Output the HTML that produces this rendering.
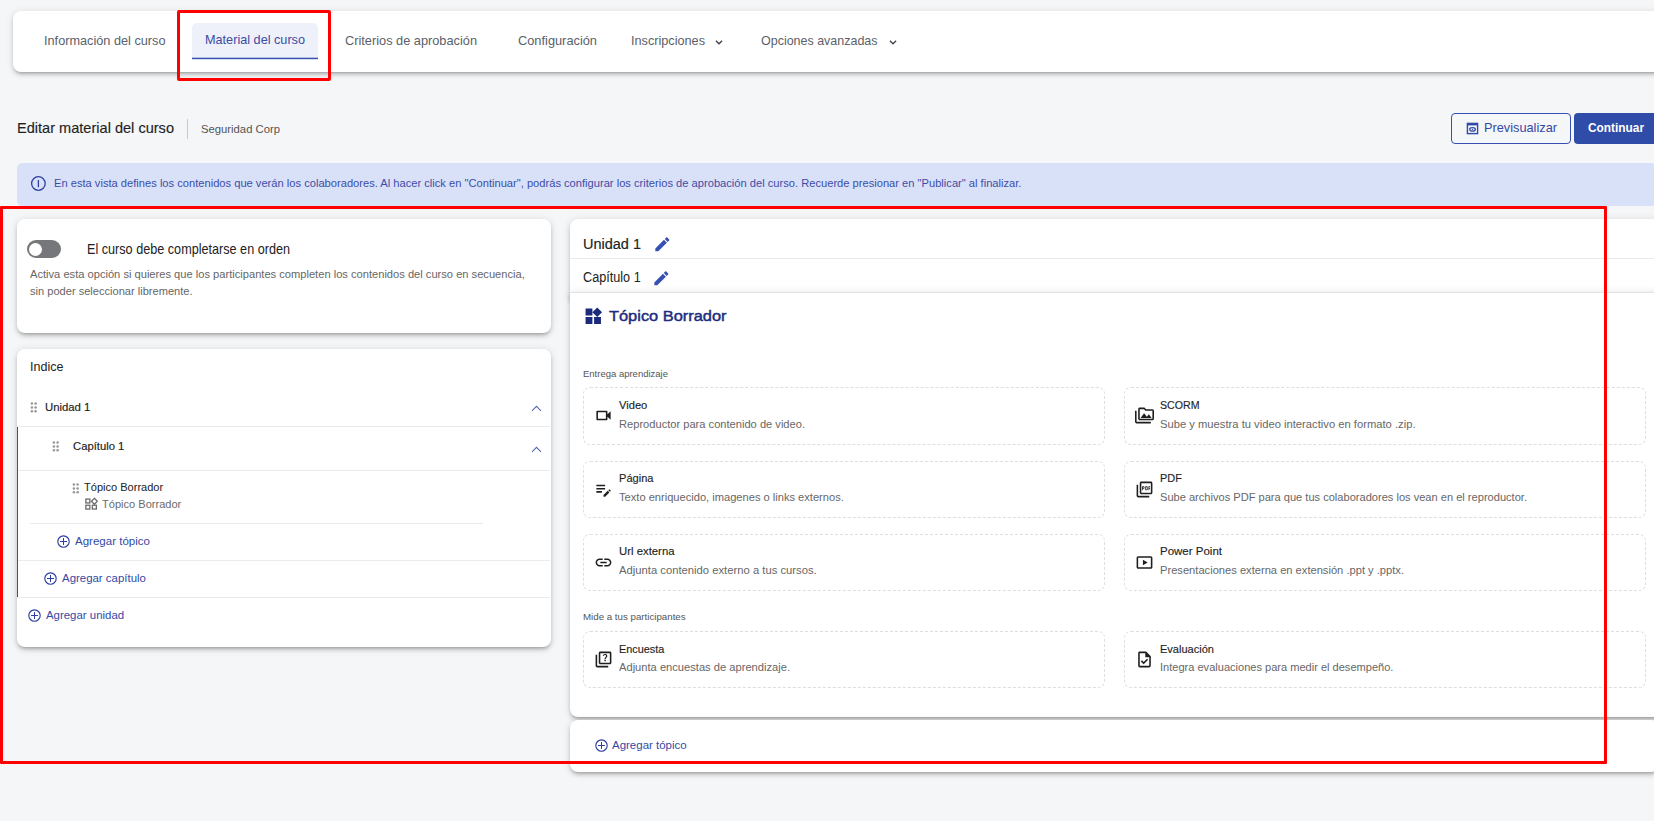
<!DOCTYPE html>
<html><head><meta charset="utf-8">
<style>
*{box-sizing:border-box;margin:0;padding:0}
html,body{width:1654px;height:821px;overflow:hidden;background:#f5f6f8;font-family:"Liberation Sans",sans-serif;color:#222}
.a{position:absolute}
.t{position:absolute;white-space:nowrap;line-height:1}
.card{position:absolute;background:#fff;border-radius:8px;box-shadow:0 3px 3px -2px rgba(0,0,0,.2),0 3px 4px 0 rgba(0,0,0,.14),0 1px 8px 0 rgba(0,0,0,.12)}
.red{position:absolute;border:3px solid #ff0000;border-radius:2px}
.hr{position:absolute;height:1px;background:#ebebeb}
.item{position:absolute;border:1px dashed #dedede;border-radius:7px;width:522px;background:#fff}
.item svg{position:absolute}
</style></head><body>
<div class="card" style="left:13px;top:11px;width:1660px;height:61px;border-radius:8px;box-shadow:0 3px 3px -2px rgba(0,0,0,.22),0 3px 4px 0 rgba(0,0,0,.12),0 1px 8px 0 rgba(0,0,0,.1)"></div>
<div class="a" style="left:192px;top:23px;width:126px;height:35px;background:#eef1f9;border-radius:5px 5px 0 0"></div>
<svg class="a" style="left:192px;top:56px" width="126" height="4"><rect x="0" y="1.7" width="126" height="1.5" fill="#3550b0"/></svg>
<div class="t" style="left:43.5px;top:33.66px;font-size:13.4px;color:#5b5f6a;transform:scaleX(0.9491);transform-origin:0 0;">Información del curso</div>
<div class="t" style="left:205px;top:33.16px;font-size:13.4px;color:#3b4ca3;transform:scaleX(0.9462);transform-origin:0 0;">Material del curso</div>
<div class="t" style="left:345px;top:33.66px;font-size:13.4px;color:#5b5f6a;transform:scaleX(0.9534);transform-origin:0 0;">Criterios de aprobación</div>
<div class="t" style="left:518px;top:33.66px;font-size:13.4px;color:#5b5f6a;transform:scaleX(0.9559);transform-origin:0 0;">Configuración</div>
<div class="t" style="left:631px;top:33.66px;font-size:13.4px;color:#5b5f6a;transform:scaleX(0.9468);transform-origin:0 0;">Inscripciones</div>
<div class="t" style="left:760.5px;top:33.66px;font-size:13.4px;color:#5b5f6a;transform:scaleX(0.9315);transform-origin:0 0;">Opciones avanzadas</div>
<svg class="a" style="left:713.5px;top:38.8px" width="10" height="7" viewBox="0 0 10 7"><path d="M1.9 1.7 L5 4.8 L8.1 1.7" fill="none" stroke="#3f434c" stroke-width="1.3"/></svg>
<svg class="a" style="left:887.5px;top:38.8px" width="10" height="7" viewBox="0 0 10 7"><path d="M1.9 1.7 L5 4.8 L8.1 1.7" fill="none" stroke="#3f434c" stroke-width="1.3"/></svg>
<div class="red" style="left:177px;top:10px;width:154px;height:71px"></div>
<div class="t" style="left:17px;top:120.81px;font-size:14.4px;color:#1f1f1f;-webkit-text-stroke:0.15px #1f1f1f;transform:scaleX(1.0118);transform-origin:0 0;">Editar material del curso</div>
<div class="a" style="left:187px;top:119px;width:1px;height:20px;background:#c9c9c9"></div>
<div class="t" style="left:201px;top:123.38px;font-size:11.6px;color:#555;transform:scaleX(0.9727);transform-origin:0 0;">Seguridad Corp</div>
<div class="a" style="left:1451px;top:113px;width:120px;height:31px;border:1px solid #3550b0;border-radius:4px"></div>
<svg class="a" style="left:1466px;top:122px" width="13" height="13" viewBox="0 0 13 13"><rect x="1.4" y="1.4" width="10.2" height="10.2" fill="none" stroke="#2f4aa8" stroke-width="1.4"/><rect x="1" y="1" width="11" height="2.4" fill="#2f4aa8"/><ellipse cx="6.5" cy="7.4" rx="2.8" ry="1.7" fill="none" stroke="#2f4aa8" stroke-width="1.3"/><circle cx="6.5" cy="7.4" r="0.7" fill="#2f4aa8"/></svg>
<div class="t" style="left:1484px;top:120.61px;font-size:13.1px;color:#3449a4;transform:scaleX(0.9739);transform-origin:0 0;">Previsualizar</div>
<div class="a" style="left:1574px;top:113px;width:90px;height:31px;background:#2f4ca8;border-radius:4px"></div>
<div class="t" style="left:1588px;top:120.61px;font-size:13.1px;color:#fff;font-weight:700;transform:scaleX(0.9057);transform-origin:0 0;">Continuar</div>
<div class="a" style="left:17px;top:163px;width:1639px;height:43px;background:#d9e1f9;border-radius:5px"></div>
<svg class="a" style="left:30px;top:175.3px" width="17" height="17" viewBox="0 0 17 17"><circle cx="8.4" cy="8.5" r="6.8" fill="none" stroke="#2f40a0" stroke-width="1.3"/><rect x="7.75" y="5" width="1.3" height="7.2" fill="#2f40a0"/></svg>
<div class="t" style="left:54px;top:177.69px;font-size:11px;color:#3d4da5;transform:scaleX(1.0126);transform-origin:0 0;">En esta vista defines los contenidos que verán los colaboradores. Al hacer click en "Continuar", podrás configurar los criterios de aprobación del curso. Recuerde presionar en "Publicar" al finalizar.</div>
<div class="card" style="left:17px;top:219px;width:534px;height:114px"></div>
<div class="a" style="left:26.6px;top:240.3px;width:34px;height:18px;border-radius:9px;background:#76777a"></div>
<div class="a" style="left:28.9px;top:243px;width:13px;height:13px;border-radius:50%;background:#fff"></div>
<div class="t" style="left:87.3px;top:242.36px;font-size:14.1px;color:#222;transform:scaleX(0.8966);transform-origin:0 0;">El curso debe completarse en orden</div>
<div class="t" style="left:30px;top:268.89px;font-size:11px;color:#666;transform:scaleX(1.0115);transform-origin:0 0;">Activa esta opción si quieres que los participantes completen los contenidos del curso en secuencia,</div>
<div class="t" style="left:30px;top:285.69px;font-size:11px;color:#666;transform:scaleX(1.0073);transform-origin:0 0;">sin poder seleccionar libremente.</div>
<div class="card" style="left:17px;top:349px;width:534px;height:298px"></div>
<div class="t" style="left:30px;top:361.16px;font-size:12.8px;color:#222;transform:scaleX(0.9779);transform-origin:0 0;">Indice</div>
<svg class="a" style="left:30px;top:402px" width="8" height="11" viewBox="0 0 8 11"><g fill="#969696"><circle cx="1.9" cy="1.6" r="1.25"/><circle cx="5.6" cy="1.6" r="1.25"/><circle cx="1.9" cy="5.5" r="1.25"/><circle cx="5.6" cy="5.5" r="1.25"/><circle cx="1.9" cy="9.2" r="1.25"/><circle cx="5.6" cy="9.2" r="1.25"/></g></svg>
<div class="t" style="left:44.6px;top:401.57px;font-size:10.9px;color:#222;-webkit-text-stroke:0.15px #222;transform:scaleX(1.0411);transform-origin:0 0;">Unidad 1</div>
<svg class="a" style="left:531px;top:404.5px" width="11" height="7" viewBox="0 0 11 7"><path d="M1 5.8 L5.5 1.3 L10 5.8" fill="none" stroke="#5567b4" stroke-width="1.05"/></svg>
<div class="hr" style="left:17px;top:426px;width:532.5px"></div>
<div class="a" style="left:17px;top:427px;width:1px;height:170px;background:#3550b0"></div>
<svg class="a" style="left:52px;top:441px" width="8" height="11" viewBox="0 0 8 11"><g fill="#969696"><circle cx="1.9" cy="1.6" r="1.25"/><circle cx="5.6" cy="1.6" r="1.25"/><circle cx="1.9" cy="5.5" r="1.25"/><circle cx="5.6" cy="5.5" r="1.25"/><circle cx="1.9" cy="9.2" r="1.25"/><circle cx="5.6" cy="9.2" r="1.25"/></g></svg>
<div class="t" style="left:72.7px;top:440.77px;font-size:10.9px;color:#222;-webkit-text-stroke:0.15px #222;transform:scaleX(1.0331);transform-origin:0 0;">Capítulo 1</div>
<svg class="a" style="left:531px;top:445.5px" width="11" height="7" viewBox="0 0 11 7"><path d="M1 5.8 L5.5 1.3 L10 5.8" fill="none" stroke="#5567b4" stroke-width="1.05"/></svg>
<div class="hr" style="left:18px;top:470px;width:531.5px"></div>
<svg class="a" style="left:71.5px;top:482.5px" width="8" height="11" viewBox="0 0 8 11"><g fill="#969696"><circle cx="1.9" cy="1.6" r="1.25"/><circle cx="5.6" cy="1.6" r="1.25"/><circle cx="1.9" cy="5.5" r="1.25"/><circle cx="5.6" cy="5.5" r="1.25"/><circle cx="1.9" cy="9.2" r="1.25"/><circle cx="5.6" cy="9.2" r="1.25"/></g></svg>
<div class="t" style="left:83.6px;top:481.99px;font-size:11px;color:#222;transform:scaleX(1.0041);transform-origin:0 0;">Tópico Borrador</div>
<svg class="a" style="left:84px;top:497px" width="14" height="14" viewBox="0 0 14 14"><g fill="none" stroke="#6b6b6b" stroke-width="1.3"><rect x="1.85" y="2.05" width="4" height="3.9"/><rect x="1.85" y="8.25" width="4" height="3.8"/><rect x="8.35" y="8.25" width="4" height="3.8"/><path d="M10.4 1.3 L13.4 4.3 L10.4 7.3 L7.4 4.3 Z"/></g></svg>
<div class="t" style="left:102px;top:498.89px;font-size:11px;color:#6b6b6b;transform:scaleX(1.0054);transform-origin:0 0;">Tópico Borrador</div>
<div class="hr" style="left:30px;top:523px;width:453px"></div>
<svg class="a" style="left:56px;top:534px" width="15" height="15" viewBox="0 0 15 15"><circle cx="7.5" cy="7.5" r="5.7" fill="none" stroke="#2f40a0" stroke-width="1.15"/><path d="M7.5 4V11M4 7.5H11" stroke="#2f40a0" stroke-width="1"/></svg>
<div class="t" style="left:74.8px;top:536.06px;font-size:10.8px;color:#3449a4;transform:scaleX(1.0679);transform-origin:0 0;">Agregar tópico</div>
<div class="hr" style="left:18px;top:560px;width:531.5px"></div>
<svg class="a" style="left:43px;top:571px" width="15" height="15" viewBox="0 0 15 15"><circle cx="7.5" cy="7.5" r="5.7" fill="none" stroke="#2f40a0" stroke-width="1.15"/><path d="M7.5 4V11M4 7.5H11" stroke="#2f40a0" stroke-width="1"/></svg>
<div class="t" style="left:62px;top:573.16px;font-size:10.8px;color:#3449a4;transform:scaleX(1.0589);transform-origin:0 0;">Agregar capítulo</div>
<div class="hr" style="left:17px;top:597px;width:532.5px"></div>
<svg class="a" style="left:27px;top:608px" width="15" height="15" viewBox="0 0 15 15"><circle cx="7.5" cy="7.5" r="5.7" fill="none" stroke="#2f40a0" stroke-width="1.15"/><path d="M7.5 4V11M4 7.5H11" stroke="#2f40a0" stroke-width="1"/></svg>
<div class="t" style="left:45.9px;top:609.66px;font-size:10.8px;color:#3449a4;transform:scaleX(1.0576);transform-origin:0 0;">Agregar unidad</div>
<div class="card" style="left:570px;top:219px;width:1100px;height:80px;border-radius:8px 0 0 0"></div>
<div class="t" style="left:583.3px;top:238.32px;font-size:13.8px;color:#222;-webkit-text-stroke:0.15px #222;transform:scaleX(1.0501);transform-origin:0 0;">Unidad 1</div>
<svg class="a" style="left:652.7px;top:234.7px" width="18.7" height="18.7" viewBox="0 0 24 24"><path fill="#3550b0" d="M3 17.25V21h3.75L17.81 9.94l-3.75-3.75L3 17.25zM20.71 7.04c.39-.39.39-1.02 0-1.41l-2.34-2.34c-.39-.39-1.02-.39-1.41 0l-1.83 1.83 3.75 3.750 1.83-1.83z"/></svg>
<div class="hr" style="left:570px;top:258px;width:1084px"></div>
<div class="t" style="left:583.3px;top:270.45px;font-size:14px;color:#222;transform:scaleX(0.9040);transform-origin:0 0;">Capítulo 1</div>
<svg class="a" style="left:652px;top:268.6px" width="18.7" height="18.7" viewBox="0 0 24 24"><path fill="#3550b0" d="M3 17.25V21h3.75L17.81 9.94l-3.75-3.75L3 17.25zM20.71 7.04c.39-.39.39-1.02 0-1.41l-2.34-2.34c-.39-.39-1.02-.39-1.41 0l-1.83 1.83 3.75 3.750 1.83-1.83z"/></svg>
<div class="card" style="left:570px;top:292px;width:1100px;height:425px;border-radius:0 0 8px 8px;border-top:1px solid #e4e4e4"></div>
<svg class="a" style="left:582.7px;top:306.3px" width="20.5" height="20.5" viewBox="0 0 24 24"><path fill="#1b2a7a" d="M13 13v8h8v-8h-8zM3 21h8v-8H3v8zM3 3v8h8V3H3zm13.66-1.31L11 7.34 16.66 13l5.66-5.66-5.66-5.65z"/></svg>
<div class="t" style="left:609.3px;top:307.63px;font-size:15.2px;color:#1d2c7d;-webkit-text-stroke:0.45px #1d2c7d;transform:scaleX(1.0789);transform-origin:0 0;">Tópico Borrador</div>
<div class="t" style="left:583.2px;top:368.96px;font-size:9.5px;color:#555;transform:scaleX(0.9994);transform-origin:0 0;">Entrega aprendizaje</div>
<div class="t" style="left:583px;top:612.26px;font-size:9.5px;color:#555;transform:scaleX(1.0225);transform-origin:0 0;">Mide a tus participantes</div>
<div class="item" style="left:583px;top:387px;height:58px"></div>
<svg class="a" style="left:594px;top:405.5px" width="19" height="19" viewBox="0 0 24 24"><path fill="#1f1f1f" d="M15 8v8H5V8h10m1-2H4c-.55 0-1 .45-1 1v10c0 .55.45 1 1 1h12c.55 0 1-.45 1-1v-3.5l4 4v-11l-4 4V7c0-.55-.45-1-1-1z"/></svg>
<div class="t" style="left:618.9px;top:399.69px;font-size:11px;color:#1f1f1f;-webkit-text-stroke:0.15px #1f1f1f;transform:scaleX(1.0130);transform-origin:0 0;">Video</div>
<div class="t" style="left:618.9px;top:418.77px;font-size:10.9px;color:#676767;transform:scaleX(1.0206);transform-origin:0 0;">Reproductor para contenido de video.</div>
<div class="item" style="left:1124px;top:387px;height:58px"></div>
<svg class="a" style="left:1135px;top:405.5px" width="19" height="19" viewBox="0 0 24 24"><path fill="#1f1f1f" d="M2 6H0v5h.01L0 20c0 1.1.9 2 2 2h18v-2H2V6zm5 9h14l-3.5-4.5-2.5 3.01L11.5 9zM22 4h-8l-2-2H6c-1.1 0-1.99.9-1.99 2L4 16c0 1.1.9 2 2 2h16c1.1 0 2-.9 2-2V6c0-1.1-.9-2-2-2zm0 12H6V4h5.17l1.41 1.41.59.59H22v10z"/></svg>
<div class="t" style="left:1159.9px;top:399.69px;font-size:11px;color:#1f1f1f;-webkit-text-stroke:0.15px #1f1f1f;transform:scaleX(0.9645);transform-origin:0 0;">SCORM</div>
<div class="t" style="left:1159.9px;top:418.77px;font-size:10.9px;color:#676767;transform:scaleX(1.0295);transform-origin:0 0;">Sube y muestra tu video interactivo en formato .zip.</div>
<div class="item" style="left:583px;top:461px;height:57px"></div>
<svg class="a" style="left:594px;top:479.5px" width="19" height="19" viewBox="0 0 24 24"><path fill="#1f1f1f" d="M3 10h11v2H3v-2zm0-2h11V6H3v2zm0 8h7v-2H3v2zm15.01-3.13.71-.71c.39-.39 1.02-.39 1.41 0l.71.71c.39.39.39 1.02 0 1.41l-.71.71-2.12-2.12zm-.71.71-5.3 5.3V21h2.12l5.3-5.3-2.12-2.12z"/></svg>
<div class="t" style="left:618.9px;top:472.69px;font-size:11px;color:#1f1f1f;-webkit-text-stroke:0.15px #1f1f1f;transform:scaleX(1.0068);transform-origin:0 0;">Página</div>
<div class="t" style="left:618.9px;top:491.77px;font-size:10.9px;color:#676767;transform:scaleX(1.0202);transform-origin:0 0;">Texto enriquecido, imagenes o links externos.</div>
<div class="item" style="left:1124px;top:461px;height:57px"></div>
<svg class="a" style="left:1135px;top:479.5px" width="19" height="19" viewBox="0 0 24 24"><path fill="#1f1f1f" d="M20 2H8c-1.1 0-2 .9-2 2v12c0 1.1.9 2 2 2h12c1.1 0 2-.9 2-2V4c0-1.1-.9-2-2-2zm0 14H8V4h12v12zM4 6H2v14c0 1.1.9 2 2 2h14v-2H4V6zm12 6v-3c0-.55-.45-1-1-1h-2v5h2c.55 0 1-.45 1-1zm-2-3h1v3h-1V9zm4 2h1v-1h-1V9h1V8h-2v5h1v-2zm-8 0h1c.55 0 1-.45 1-1V9c0-.55-.45-1-1-1H9v5h1v-2zm0-2h1v1h-1V9z"/></svg>
<div class="t" style="left:1159.9px;top:472.69px;font-size:11px;color:#1f1f1f;-webkit-text-stroke:0.15px #1f1f1f;transform:scaleX(0.9909);transform-origin:0 0;">PDF</div>
<div class="t" style="left:1159.9px;top:491.77px;font-size:10.9px;color:#676767;transform:scaleX(1.0171);transform-origin:0 0;">Sube archivos PDF para que tus colaboradores los vean en el reproductor.</div>
<div class="item" style="left:583px;top:534px;height:57px"></div>
<svg class="a" style="left:594px;top:552.5px" width="19" height="19" viewBox="0 0 24 24"><path fill="#1f1f1f" d="M3.9 12c0-1.71 1.39-3.1 3.1-3.1h4V7H7c-2.76 0-5 2.24-5 5s2.24 5 5 5h4v-1.9H7c-1.71 0-3.1-1.39-3.1-3.1zM8 13h8v-2H8v2zm9-6h-4v1.9h4c1.71 0 3.1 1.39 3.1 3.1s-1.39 3.1-3.1 3.1h-4V17h4c2.76 0 5-2.24 5-5s-2.24-5-5-5z"/></svg>
<div class="t" style="left:618.9px;top:545.69px;font-size:11px;color:#1f1f1f;-webkit-text-stroke:0.15px #1f1f1f;transform:scaleX(1.0317);transform-origin:0 0;">Url externa</div>
<div class="t" style="left:618.9px;top:564.77px;font-size:10.9px;color:#676767;transform:scaleX(1.0334);transform-origin:0 0;">Adjunta contenido externo a tus cursos.</div>
<div class="item" style="left:1124px;top:534px;height:57px"></div>
<svg class="a" style="left:1135px;top:552.5px" width="19" height="19" viewBox="0 0 24 24"><path fill="#1f1f1f" d="M10 8.5v7l6-3.5-6-3.5zM20 4H4c-1.1 0-2 .9-2 2v12c0 1.1.9 2 2 2h16c1.1 0 2-.9 2-2V6c0-1.1-.9-2-2-2zm0 14H4V6h16v12z"/></svg>
<div class="t" style="left:1159.9px;top:545.69px;font-size:11px;color:#1f1f1f;-webkit-text-stroke:0.15px #1f1f1f;transform:scaleX(1.0453);transform-origin:0 0;">Power Point</div>
<div class="t" style="left:1159.9px;top:564.77px;font-size:10.9px;color:#676767;transform:scaleX(1.0229);transform-origin:0 0;">Presentaciones externa en extensión .ppt y .pptx.</div>
<div class="item" style="left:583px;top:631px;height:57px"></div>
<svg class="a" style="left:594px;top:649.5px" width="19" height="19" viewBox="0 0 24 24"><path fill="#1f1f1f" d="M4 6H2v14c0 1.1.9 2 2 2h14v-2H4V6zm16-4H8c-1.1 0-2 .9-2 2v12c0 1.1.9 2 2 2h12c1.1 0 2-.9 2-2V4c0-1.1-.9-2-2-2zm0 14H8V4h12v12zM13.51 10.16c.41-.73 1.18-1.16 1.63-1.8.48-.68.21-1.94-1.14-1.94-.88 0-1.32.67-1.5 1.23l-1.37-.57C11.51 5.96 12.52 5 13.99 5c1.23 0 2.08.56 2.51 1.26.37.6.58 1.73.01 2.57-.63.93-1.23 1.21-1.56 1.81-.13.24-.18.4-.18 1.18h-1.52c.01-.41-.06-1.08.26-1.66zm-.56 3.24c0-.59.47-1.04 1.04-1.04.59 0 1.04.45 1.04 1.04 0 .58-.44 1.05-1.04 1.05-.57 0-1.04-.47-1.04-1.05z"/></svg>
<div class="t" style="left:618.9px;top:643.69px;font-size:11px;color:#1f1f1f;-webkit-text-stroke:0.15px #1f1f1f;transform:scaleX(0.9896);transform-origin:0 0;">Encuesta</div>
<div class="t" style="left:618.9px;top:661.77px;font-size:10.9px;color:#676767;transform:scaleX(1.0233);transform-origin:0 0;">Adjunta encuestas de aprendizaje.</div>
<div class="item" style="left:1124px;top:631px;height:57px"></div>
<svg class="a" style="left:1135px;top:649.5px" width="19" height="19" viewBox="0 0 24 24"><path fill="#1f1f1f" d="M14 2H6c-1.1 0-1.99.9-1.99 2L4 20c0 1.1.89 2 1.99 2H18c1.1 0 2-.9 2-2V8l-6-6zm4 18H6V4h7v5h5v11zm-9.18-6.95L7.4 14.46 10.94 18l5.66-5.66-1.41-1.41-4.24 4.24-2.13-2.12z"/></svg>
<div class="t" style="left:1159.9px;top:643.69px;font-size:11px;color:#1f1f1f;-webkit-text-stroke:0.15px #1f1f1f;transform:scaleX(1.0013);transform-origin:0 0;">Evaluación</div>
<div class="t" style="left:1159.9px;top:661.77px;font-size:10.9px;color:#676767;transform:scaleX(1.0145);transform-origin:0 0;">Integra evaluaciones para medir el desempeño.</div>
<div class="card" style="left:570px;top:720px;width:1089px;height:51.5px"></div>
<svg class="a" style="left:594px;top:738px" width="15" height="15" viewBox="0 0 15 15"><circle cx="7.5" cy="7.5" r="5.7" fill="none" stroke="#2f40a0" stroke-width="1.15"/><path d="M7.5 4V11M4 7.5H11" stroke="#2f40a0" stroke-width="1"/></svg>
<div class="t" style="left:612.3px;top:739.86px;font-size:10.8px;color:#3449a4;transform:scaleX(1.0636);transform-origin:0 0;">Agregar tópico</div>
<div class="red" style="left:0;top:206px;width:1607px;height:557.5px;border-radius:1px"></div>
</body></html>
